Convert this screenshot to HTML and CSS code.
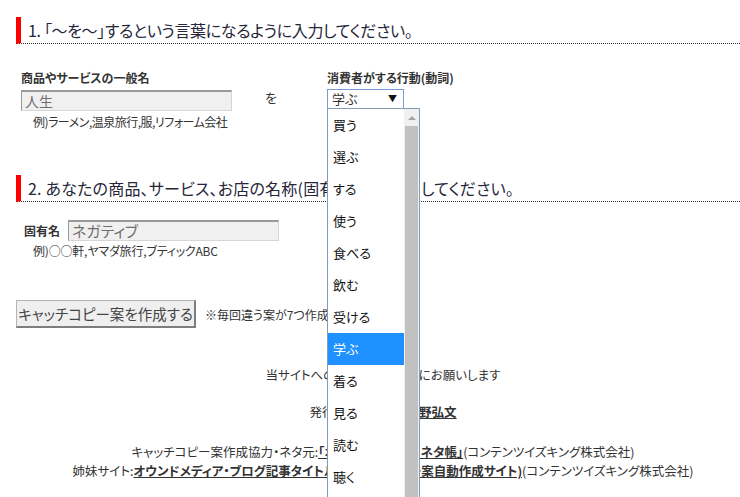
FILE: index.html
```html
<!DOCTYPE html>
<html lang="ja">
<head>
<meta charset="utf-8">
<title>キャッチコピー案作成</title>
<link rel="stylesheet" href="styles.css">
</head>
<body>
<div class="page">
  <h2 class="sec-title sec-one">1. 「～を～」するという言葉になるように入力してください。</h2>
  <div class="row1">
    <div class="field field-noun">
      <div class="label">商品やサービスの一般名</div>
      <div class="textbox">人生</div>
      <div class="example">例)ラーメン,温泉旅行,服,リフォーム会社</div>
    </div>
    <div class="wo">を</div>
    <div class="field field-verb">
      <div class="label">消費者がする行動(動詞)</div>
      <div class="select-wrap">
        <div class="select"><span>学ぶ</span><span class="arrow">▼</span></div>
        <div class="dropdown">
          <ul class="options">
            <li>買う</li>
            <li>選ぶ</li>
            <li>する</li>
            <li>使う</li>
            <li>食べる</li>
            <li>飲む</li>
            <li>受ける</li>
            <li class="selected">学ぶ</li>
            <li>着る</li>
            <li>見る</li>
            <li>読む</li>
            <li>聴く</li>
          </ul>
          <div class="scrollbar">
            <div class="scroll-up"><span class="up-tri"></span></div>
            <div class="scroll-thumb"></div>
          </div>
        </div>
      </div>
    </div>
  </div>

  <h2 class="sec-title sec-two">2. あなたの商品、サービス、お店の名称(固有名詞)を入力してください。</h2>
  <div class="row2">
    <div class="label2">固有名</div>
    <div class="textbox textbox2">ネガティブ</div>
  </div>
  <div class="example example2">例)○○軒,ヤマダ旅行,ブティックABC</div>

  <div class="action">
    <div class="button">キャッチコピー案を作成する</div>
    <div class="note">※毎回違う案が7つ作成されます。</div>
  </div>

  <div class="footer">
    <p class="f1">当サイトへのご連絡はメールにお願いします</p>
    <p class="f2">発行・運営責任者:<a class="strong-link">中野弘文</a></p>
    <p class="f3">キャッチコピー案作成協力・ネタ元:<a class="plain-link">「オウンドメディア・ネタ帳」</a>(コンテンツイズキング株式会社)</p>
    <p class="f4">姉妹サイト:<a class="plain-link">オウンドメディア・ブログ記事タイトル(キャッチコピー案自動作成サイト)</a>(コンテンツイズキング株式会社)</p>
  </div>
</div>
</body>
</html>
```

FILE: styles.css
```css
* {
  box-sizing: border-box;
}

html, body {
  margin: 0;
  padding: 0;
  background: #fff;
}

body {
  font-family: "Noto Sans CJK JP", "Noto Sans", sans-serif;
  font-feature-settings: "palt";
  color: #333;
  width: 740px;
  height: 497px;
  overflow: hidden;
}

.page {
  padding-top: 17px;
}

.sec-title {
  margin: 0 0 0 16px;
  height: 27px;
  border-left: 5px solid #ff0000;
  border-bottom: 1px dotted #333;
  padding-left: 7px;
  font-size: 16px;
  font-weight: normal;
  line-height: 26px;
  color: #26263a;
  white-space: nowrap;
  overflow: hidden;
}

.sec-one {
  letter-spacing: -0.35px;
}

.sec-two {
  margin-top: 46px;
  letter-spacing: 0.2px;
}

.row1 {
  display: flex;
  margin: 27px 0 0 21px;
}

.field-noun {
  width: 244px;
}

.label {
  font-size: 12px;
  font-weight: bold;
  line-height: 14px;
  height: 14px;
  white-space: nowrap;
}

.textbox {
  width: 211px;
  height: 21px;
  margin-top: 5px;
  background: #f0f0f0;
  border: 1px solid #d6d6d6;
  border-top: 2px solid #9a9a9a;
  border-left: 1px solid #9a9a9a;
  padding-left: 3px;
  font-size: 14px;
  line-height: 18px;
  color: #6f6f6f;
}

.example {
  font-size: 12px;
  line-height: 14px;
  margin: 4px 0 0 12px;
  white-space: nowrap;
  letter-spacing: -0.5px;
}

.wo {
  width: 62px;
  font-size: 13px;
  line-height: 14px;
  padding-top: 20px;
}

.field-verb {
  width: 150px;
}

.select-wrap {
  position: relative;
  margin-top: 4px;
}

.select {
  width: 77px;
  height: 20px;
  border: 1px solid #7a9cd3;
  display: flex;
  justify-content: space-between;
  align-items: center;
  padding: 0 6px 0 4px;
  font-size: 13px;
  line-height: 18px;
  background: #fff;
}

.arrow {
  font-size: 9px;
  color: #111;
}

.dropdown {
  position: absolute;
  left: 0;
  top: 19px;
  width: 93px;
  height: 420px;
  border: 1px solid #7f9db9;
  background: #fff;
  display: flex;
  z-index: 5;
}

.options {
  list-style: none;
  margin: 0;
  padding: 0;
  width: 76px;
}

.options li {
  height: 32px;
  line-height: 32px;
  padding-left: 5px;
  font-size: 13px;
  color: #111;
}

.options li.selected {
  background: #1e90ff;
  color: #fff;
}

.scrollbar {
  width: 15px;
  background: #f0f0f0;
  display: flex;
  flex-direction: column;
}

.scroll-up {
  height: 17px;
  display: flex;
  align-items: center;
  justify-content: center;
}

.up-tri {
  width: 0;
  height: 0;
  border-left: 4px solid transparent;
  border-right: 4px solid transparent;
  border-bottom: 4px solid #a3a3a3;
}

.scroll-thumb {
  flex: 1;
  margin: 0 1px;
  background: #c1c1c1;
}

.row2 {
  display: flex;
  align-items: center;
  margin: 18px 0 0 24px;
  gap: 8px;
}

.label2 {
  font-size: 12px;
  font-weight: bold;
  line-height: 14px;
  width: 36px;
}

.textbox2 {
  margin-top: 0;
  font-size: 15px;
}

.example2 {
  margin: 3px 0 0 33px;
  letter-spacing: -0.2px;
}

.action {
  display: flex;
  align-items: center;
  margin: 42px 0 0 16px;
  gap: 9px;
}

.button {
  width: 180px;
  height: 28px;
  background: #efefef;
  border: 1px solid #b5b5b5;
  border-right: 2px solid #7d7d7d;
  border-bottom: 2px solid #7d7d7d;
  font-size: 14.5px;
  line-height: 25px;
  text-align: center;
  color: #444;
  white-space: nowrap;
}

.note {
  font-size: 12px;
  white-space: nowrap;
}

.footer {
  margin-top: 40px;
  padding-left: 26px;
  text-align: center;
  font-size: 12.5px;
}

.footer p {
  margin: 0;
  line-height: 14px;
  white-space: nowrap;
}

.footer .f2 {
  margin-top: 23px;
}

.footer .f3 {
  margin-top: 26px;
}

.footer .f4 {
  margin-top: 5px;
}

.strong-link {
  font-weight: bold;
  text-decoration: underline;
  color: #333;
}

.plain-link {
  font-weight: bold;
  text-decoration: underline;
  color: #333;
}
```
